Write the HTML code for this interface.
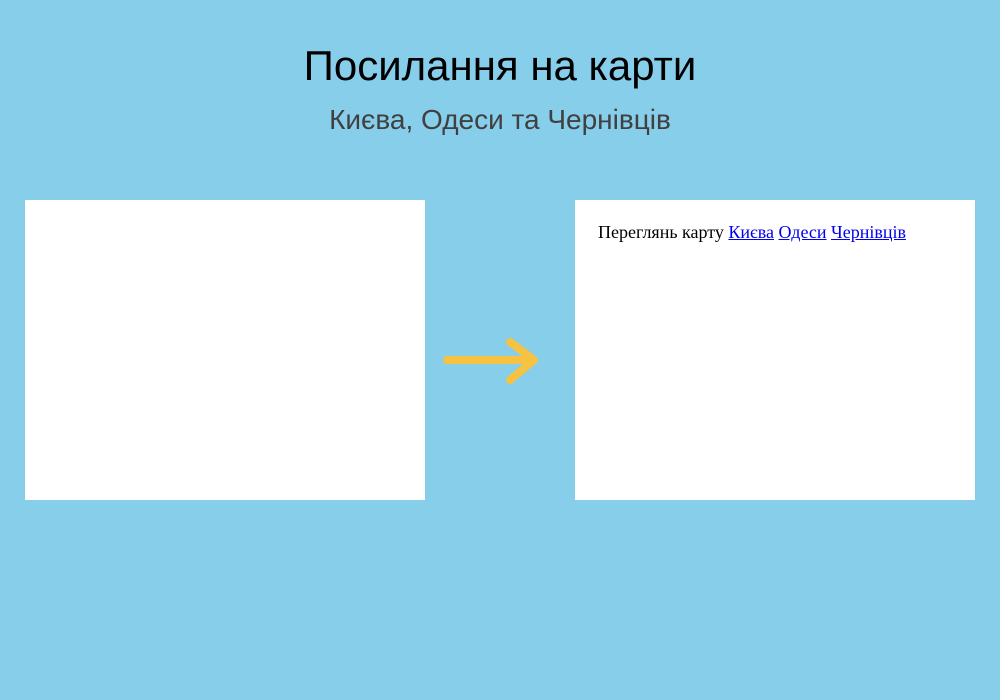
<!DOCTYPE html>
<html><head><meta charset="utf-8"><style>
body{margin:0;width:1000px;height:700px;background:#87ceeb;position:relative;overflow:hidden;font-family:"Liberation Sans",sans-serif}
h1{position:absolute;top:38px;left:0;width:1000px;margin:0;text-align:center;font-weight:normal;font-size:42px;line-height:56px;color:#000}
h2{position:absolute;top:101px;left:0;width:1000px;margin:0;text-align:center;font-weight:normal;font-size:28px;line-height:38px;color:#404040}
.box{position:absolute;top:200px;width:400px;height:300px;background:#fff}
p{margin:0;position:absolute;left:23px;top:22px;font-family:"Liberation Serif",serif;font-size:18px;color:#000}
a{color:#00e}
</style></head><body>
<h1>Посилання на карти</h1>
<h2>Києва, Одеси та Чернівців</h2>
<div class="box" style="left:25px"></div>
<svg style="position:absolute;left:0;top:0" width="1000" height="700"><path d="M447 360H533M510 342L534 360L510 380" stroke="#f5c242" stroke-width="8" stroke-linecap="round" stroke-linejoin="round" fill="none"/></svg>
<div class="box" style="left:575px"><p>Переглянь карту <a href="#">Києва</a> <a href="#">Одеси</a> <a href="#">Чернівців</a></p></div>
</body></html>
